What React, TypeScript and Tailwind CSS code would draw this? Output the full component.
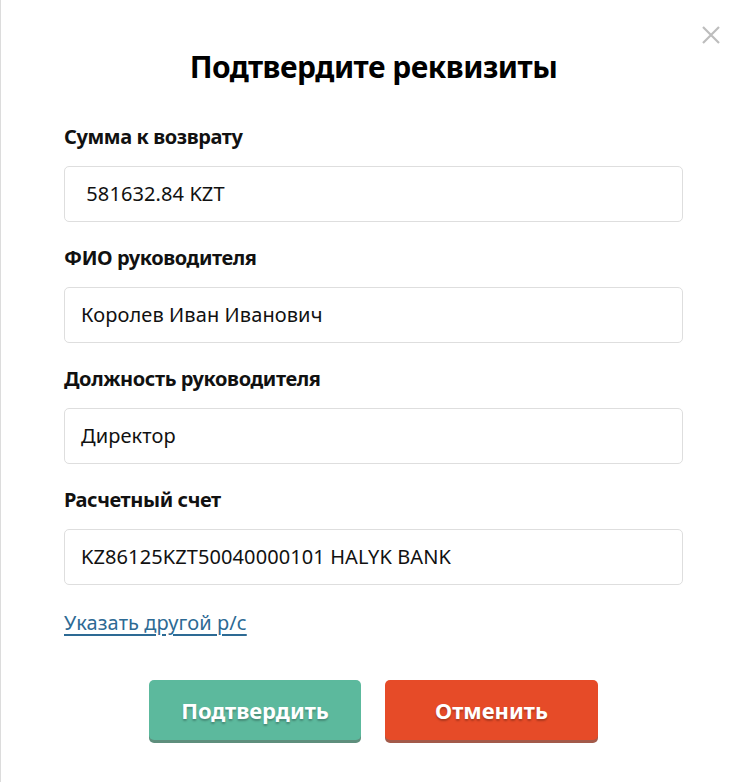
import React from "react";

const fields = [
  { label: "Сумма к возврату", value: " 581632.84 KZT" },
  { label: "ФИО руководителя", value: "Королев Иван Иванович" },
  { label: "Должность руководителя", value: "Директор" },
  { label: "Расчетный счет", value: "KZ86125KZT50040000101 HALYK BANK" },
];

export default function App() {
  return (
    <div
      className="w-[746px] h-[782px] bg-white border-l border-[#dcdcdc] relative text-[#111]"
      style={{ fontFamily: '"Noto Sans", "Open Sans", sans-serif' }}
    >
      <button className="absolute right-[25px] top-[25px] w-[20px] h-[20px] flex items-center justify-center">
        <svg width="20" height="20" viewBox="0 0 20 20">
          <path d="M2 2 L18 18 M18 2 L2 18" stroke="#bdbdbd" strokeWidth="2.2" />
        </svg>
      </button>
      <div className="px-[63px] pt-[47px]">
        <h1 className="text-center text-[30px] leading-[40px] font-bold text-black tracking-[-0.5px]">
          Подтвердите реквизиты
        </h1>
        <div className="mt-[30px] flex flex-col gap-[16px]">
          {fields.map((f) => (
            <div key={f.label} className="flex flex-col">
              <div className="pt-[5px] text-[20px] leading-[30px] font-bold text-[#111] tracking-[-0.4px]">
                {f.label}
              </div>
              <div className="mt-[14px] h-[56px] border border-[#dedede] rounded-[5px] flex items-center px-[16px] text-[20px] text-[#111] whitespace-pre tracking-[0.1px]">
                {f.value}
              </div>
            </div>
          ))}
        </div>
        <a
          href="#"
          className="inline-block mt-[23px] text-[20px] leading-[30px] text-[#2d6a94] underline underline-offset-[4px] tracking-[0.1px]"
        >
          Указать другой р/с
        </a>
        <div className="mt-[42px] flex justify-center gap-[24px]">
          <button className="w-[212px] h-[60px] rounded-[5px] bg-[#5cb99d] shadow-[0_3px_0_#5e8e7c] text-white text-[22px] font-bold [text-shadow:0_2px_2px_rgba(0,0,0,0.25)]">
            Подтвердить
          </button>
          <button className="w-[213px] h-[60px] rounded-[5px] bg-[#e64b28] shadow-[0_3px_0_#a35a4a] text-white text-[22px] font-bold [text-shadow:0_2px_2px_rgba(0,0,0,0.25)]">
            Отменить
          </button>
        </div>
      </div>
    </div>
  );
}
